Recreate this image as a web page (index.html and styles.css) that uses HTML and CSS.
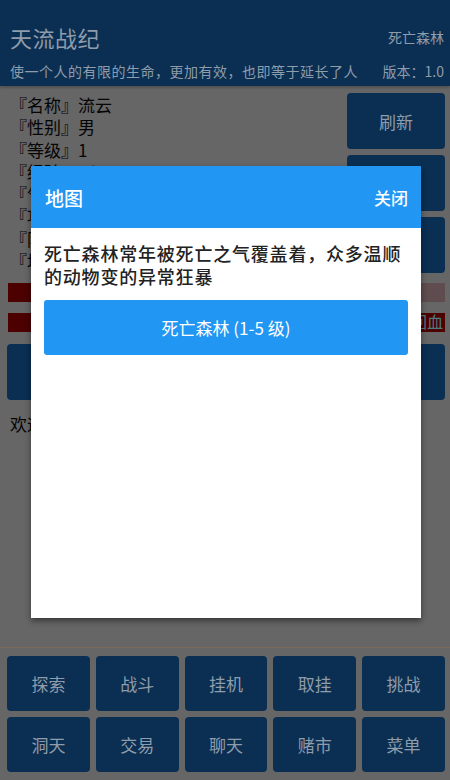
FILE: index.html
```html
<!DOCTYPE html>
<html lang="zh-CN">
<head>
<meta charset="utf-8">
<title>天流战纪</title>
<link rel="stylesheet" href="styles.css">
</head>
<body>
<div class="app modal-open">
  <header class="topbar">
    <div class="topbar-row">
      <h1 class="game-title">天流战纪</h1>
      <span class="location">死亡森林</span>
    </div>
    <div class="motto-row">
      <span class="motto">使一个人的有限的生命，更加有效，也即等于延长了人</span>
      <span class="version">版本：1.0</span>
    </div>
  </header>

  <main class="content">
    <section class="status">
      <ul class="attrs">
        <li>『名称』流云</li>
        <li>『性别』男</li>
        <li>『等级』1</li>
        <li>『经验』0/100</li>
        <li>『气血』100/100</li>
        <li>『攻击』10</li>
        <li>『防御』5</li>
        <li>『境界』凡人</li>
      </ul>
      <div class="side-actions">
        <button class="btn">刷新</button>
        <button class="btn">背包</button>
        <button class="btn">技能</button>
      </div>
    </section>

    <div class="bars">
      <div class="bar"><div class="bar-fill" style="width: 30%"></div></div>
      <div class="bar"><div class="bar-fill" style="width: 100%"></div><span class="bar-label">回血</span></div>
    </div>

    <button class="btn btn-wide">探索死亡森林</button>

    <p class="welcome">欢迎来到天流战纪</p>
  </main>

  <nav class="dock">
    <button class="btn">探索</button>
    <button class="btn">战斗</button>
    <button class="btn">挂机</button>
    <button class="btn">取挂</button>
    <button class="btn">挑战</button>
    <button class="btn">洞天</button>
    <button class="btn">交易</button>
    <button class="btn">聊天</button>
    <button class="btn">赌市</button>
    <button class="btn">菜单</button>
  </nav>

  <div class="dialog">
    <div class="dialog-head">
      <span class="dialog-title">地图</span>
      <span class="dialog-close">关闭</span>
    </div>
    <div class="dialog-body">
      <p class="dialog-desc">死亡森林常年被死亡之气覆盖着，众多温顺的动物变的异常狂暴</p>
      <button class="map-btn">死亡森林 (1-5 级)</button>
    </div>
  </div>
</div>
</body>
</html>
```

FILE: styles.css
```css
* {
  box-sizing: border-box;
}

html, body {
  margin: 0;
  padding: 0;
  width: 450px;
  height: 780px;
  overflow: hidden;
  font-family: "Noto Sans CJK SC", "Noto Sans", Roboto, sans-serif;
}

/* Page palette; .modal-open swaps in the dimmed shades shown behind a dialog */
.app {
  --page-bg: #ffffff;
  --primary: #2196f3;
  --on-primary: #ffffff;
  --text: #111111;
  --hp: #ff0000;
  --hp-track: #ffcdd2;
  --hp-label: #80deea;
  --dock-line: #ffd9a0;

  position: relative;
  height: 780px;
  display: flex;
  flex-direction: column;
  background: var(--page-bg);
  color: var(--text);
}

.app.modal-open {
  --page-bg: #666666;
  --primary: #0a2f52;
  --on-primary: #8f9cab;
  --text: #050505;
  --hp: #4c0000;
  --hp-track: #5e4c4e;
  --hp-label: #4f7a80;
  --dock-line: #7a6a5a;
}

/* Top bar */
.topbar {
  background: var(--primary);
  color: var(--on-primary);
  padding: 0 6px 0 10px;
  height: 86px;
  box-shadow: 0 2px 2px rgba(0, 0, 0, 0.2);
}

.topbar-row {
  display: flex;
  justify-content: space-between;
  align-items: center;
  height: 58px;
  padding-top: 16px;
}

.game-title {
  margin: 0;
  font-size: 22px;
  font-weight: 400;
  letter-spacing: 0.5px;
}

.location {
  font-size: 14px;
}

.motto-row {
  display: flex;
  align-items: center;
  justify-content: space-between;
  gap: 6px;
  height: 26px;
  font-size: 14px;
  white-space: nowrap;
}

.motto {
  letter-spacing: 0.5px;
}

.version {
  flex: none;
}

/* Main content */
.content {
  padding: 7px 5px 0 7px;
}

.status {
  display: flex;
  justify-content: space-between;
}

.attrs {
  list-style: none;
  margin: 0;
  padding: 1px 0 0 3px;
  font-size: 17px;
  line-height: 22.3px;
}

.side-actions {
  width: 98px;
  display: flex;
  flex-direction: column;
  gap: 6px;
}

.btn {
  border: none;
  border-radius: 4px;
  background: var(--primary);
  color: var(--on-primary);
  font-family: inherit;
  font-size: 17px;
  padding: 0;
}

.side-actions .btn {
  height: 56px;
}

.bars {
  display: flex;
  flex-direction: column;
  gap: 11px;
  margin-top: 10px;
  padding-left: 1px;
}

.bar {
  position: relative;
  height: 19px;
  background: var(--hp-track);
}

.bar-fill {
  height: 100%;
  background: var(--hp);
}

.bar-label {
  position: absolute;
  right: 2px;
  top: -4px;
  font-size: 16px;
  color: var(--hp-label);
}

.btn-wide {
  display: block;
  width: 100%;
  height: 56px;
  margin-top: 12px;
}

.welcome {
  margin: 11px 0 0 3px;
  font-size: 17px;
}

/* Bottom command grid */
.dock {
  margin-top: auto;
  display: grid;
  grid-template-columns: repeat(5, 1fr);
  gap: 6px;
  padding: 8px 5px 8px 7px;
  border-top: 1px solid var(--dock-line);
}

.dock .btn {
  height: 55px;
}

/* Map dialog */
.dialog {
  position: absolute;
  z-index: 10;
  left: 31px;
  top: 166px;
  width: 390px;
  height: 452px;
  background: #ffffff;
  box-shadow: 0 3px 6px rgba(0, 0, 0, 0.45);
}

.dialog-head {
  height: 62px;
  background: #2196f3;
  color: #ffffff;
  display: flex;
  justify-content: space-between;
  align-items: center;
  padding: 0 13px 0 14px;
}

.dialog-title {
  font-size: 19px;
  font-weight: 500;
}

.dialog-close {
  font-size: 17px;
  font-weight: 500;
}

.dialog-body {
  padding: 14px 13px 0 13px;
}

.dialog-desc {
  margin: 0;
  font-size: 18px;
  line-height: 23px;
  letter-spacing: 0.8px;
  font-weight: 500;
  color: #222;
}

.map-btn {
  display: block;
  width: 100%;
  height: 55px;
  margin-top: 12px;
  border: none;
  border-radius: 3px;
  background: #2196f3;
  color: #ffffff;
  font-family: inherit;
  font-size: 17px;
}
```
